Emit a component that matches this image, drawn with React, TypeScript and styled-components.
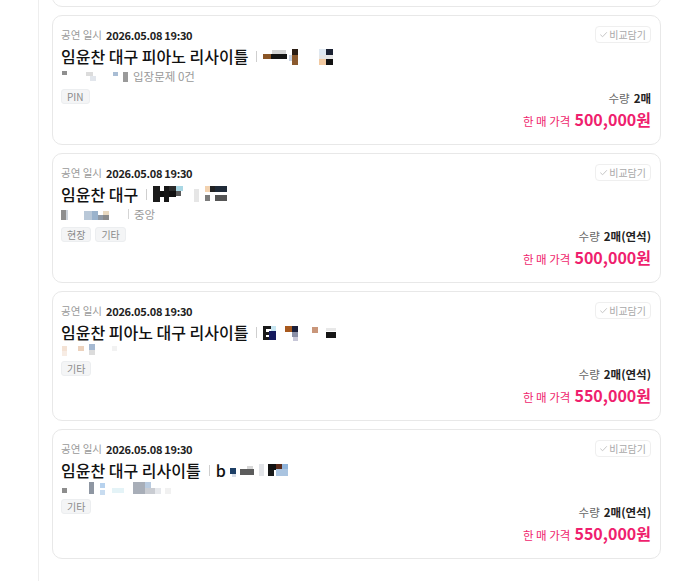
import React from "react";
import styled, { createGlobalStyle } from "styled-components";

const GlobalStyle = createGlobalStyle`
  html, body { margin: 0; padding: 0; background: #fff; }
  body {
    font-family: "Noto Sans CJK KR", "Noto Sans", sans-serif;
    -webkit-font-smoothing: antialiased;
  }
  * { box-sizing: border-box; }
`;

const Panel = styled.div`
  margin-left: 38px;
  width: 636px;
  height: 581px;
  border-left: 1px solid #eeeeee;
  padding: 0 13px;
  overflow: hidden;
`;

const List = styled.div`
  display: flex;
  flex-direction: column;
  gap: 8px;
  margin-top: -123px;
`;

const Card = styled.div`
  display: flex;
  justify-content: space-between;
  height: 130px;
  border: 1px solid #e8e8e8;
  border-radius: 10px;
  padding: 11px 9px 11px 8px;
  background: #fff;
`;

const Left = styled.div`
  display: flex;
  flex-direction: column;
  min-width: 0;
`;

const DateRow = styled.div`
  font-size: 10.5px;
  line-height: 16px;
  color: #9a9a9a;
  display: flex;
  align-items: center;
  gap: 4px;
`;

const DateValue = styled.span`
  font-size: 11px;
  font-weight: 700;
  letter-spacing: -0.3px;
  color: #222;
`;

const TitleRow = styled.div`
  display: flex;
  align-items: center;
  margin-top: 2px;
  font-size: 16px;
  line-height: 22px;
  font-weight: 500;
  color: #111;
  white-space: nowrap;
`;

const Sep = styled.span`
  display: inline-block;
  width: 1px;
  height: 11px;
  background: #cfcfcf;
  margin: 0 6px 0 8px;
`;

const InfoRow = styled.div`
  display: flex;
  align-items: center;
  gap: 4px;
  font-size: 11.5px;
  line-height: 18px;
  color: #999;
  white-space: nowrap;
`;

const InfoSep = styled.span`
  display: inline-block;
  width: 1px;
  height: 10px;
  background: #d5d5d5;
  margin: 0 1px 0 6px;
`;

const Tags = styled.div`
  display: flex;
  gap: 4px;
  margin-top: 4px;
`;

const Tag = styled.span`
  display: inline-flex;
  align-items: center;
  height: 15px;
  padding: 0 5px;
  font-size: 10px;
  color: #8a8a8a;
  background: #f4f5f6;
  border: 1px solid #eceef0;
  border-radius: 3px;
`;

const Right = styled.div`
  display: flex;
  flex-direction: column;
  align-items: flex-end;
  justify-content: space-between;
`;

const CompareBtn = styled.button`
  display: inline-flex;
  align-items: center;
  gap: 1px;
  height: 17px;
  padding: 0 4px 0 3px;
  border: 1px solid #efefef;
  border-radius: 4px;
  background: #fff;
  font-family: inherit;
  font-size: 10px;
  color: #a9a9a9;
  margin-top: -1px;
`;

const Bottom = styled.div`
  display: flex;
  flex-direction: column;
  align-items: flex-end;
`;

const Qty = styled.div`
  font-size: 11.5px;
  line-height: 18px;
  color: #666;
  b { color: #222; font-weight: 700; margin-left: 4px; }
`;

const Price = styled.div`
  display: flex;
  align-items: baseline;
  gap: 4px;
  line-height: 24px;
  color: #ef1f6e;
  font-size: 11.5px;
  strong { font-size: 16px; font-weight: 700; }
`;

type Block = [number, number, number, number, string];

const Mosaic: React.FC<{ w: number; h: number; blocks: Block[] }> = ({ w, h, blocks }) => (
  <svg width={w} height={h} viewBox={`0 0 ${w} ${h}`} style={{ display: "block", flex: "none" }}>
    {blocks.map(([x, y, bw, bh, c], i) => (
      <rect key={i} x={x} y={y} width={bw} height={bh} fill={c} />
    ))}
  </svg>
);

const Check = () => (
  <svg width="9" height="9" viewBox="0 0 10 10">
    <path d="M1.5 5.2 L4 7.5 L8.7 2.5" fill="none" stroke="#c4c4c4" strokeWidth="1.1" />
  </svg>
);

type Item = {
  title: string;
  titleExtra?: string;
  titleMosaic: { w: number; blocks: Block[] };
  infoMosaic: { w: number; blocks: Block[] };
  infoText?: string;
  infoSep?: boolean;
  tags: string[];
  qty: string;
  price: string;
};

const items: Item[] = [
  {
    title: "임윤찬 대구 피아노 리사이틀",
    titleMosaic: { w: 10, blocks: [] },
    infoMosaic: { w: 10, blocks: [] },
    tags: ["기타"],
    qty: "2매",
    price: "500,000원",
  },
  {
    title: "임윤찬 대구 피아노 리사이틀",
    titleMosaic: {
      w: 74,
      blocks: [
        [0, 7, 8, 5, "#8a5526"],
        [8, 7, 16, 5, "#141414"],
        [9, 3, 14, 4, "#d4d4d4"],
        [26, 8, 3, 6, "#c8d2e2"],
        [29, 2, 6, 6, "#2a1d14"],
        [29, 8, 6, 10, "#8b5a2e"],
        [56, 2, 7, 6, "#dfe8f1"],
        [63, 2, 7, 6, "#1c2233"],
        [56, 12, 7, 6, "#f1c9a1"],
        [63, 12, 7, 6, "#121212"],
        [56, 8, 14, 4, "#e6e6e6"],
      ],
    },
    infoMosaic: {
      w: 68,
      blocks: [
        [1, 2, 5, 4, "#8f8f8f"],
        [25, 3, 7, 4, "#dcdcdc"],
        [29, 7, 6, 5, "#e2e6ec"],
        [52, 3, 5, 4, "#a9bdd4"],
        [62, 3, 5, 10, "#9a9a9a"],
      ],
    },
    infoText: "입장문제 0건",
    tags: ["PIN"],
    qty: "2매",
    price: "500,000원",
  },
  {
    title: "임윤찬 대구",
    titleMosaic: {
      w: 78,
      blocks: [
        [0, 1, 7, 16, "#1b1b1b"],
        [7, 6, 16, 6, "#111"],
        [11, 1, 5, 16, "#161616"],
        [16, 1, 7, 5, "#2a2a2a"],
        [23, 1, 7, 5, "#a9d7e4"],
        [23, 6, 5, 5, "#5a5a5a"],
        [41, 4, 5, 13, "#e6e6e6"],
        [52, 1, 5, 6, "#f2d2b0"],
        [57, 1, 5, 6, "#222"],
        [62, 1, 12, 6, "#1f2a38"],
        [52, 10, 5, 6, "#7c7c7c"],
        [62, 10, 12, 6, "#555"],
      ],
    },
    infoMosaic: {
      w: 57,
      blocks: [
        [0, 3, 5, 10, "#8e8e8e"],
        [5, 3, 2, 10, "#cdd3db"],
        [23, 4, 8, 9, "#b9c8d8"],
        [31, 4, 6, 9, "#9bb3cc"],
        [37, 8, 5, 5, "#909aa6"],
        [42, 4, 6, 4, "#e9d9c0"],
        [42, 8, 6, 5, "#8b8b8b"],
      ],
    },
    infoText: "중앙",
    infoSep: true,
    tags: ["현장", "기타"],
    qty: "2매(연석)",
    price: "500,000원",
  },
  {
    title: "임윤찬 피아노 대구 리사이틀",
    titleMosaic: {
      w: 76,
      blocks: [
        [0, 3, 3, 14, "#1a1a1a"],
        [3, 3, 5, 3, "#1a1a1a"],
        [3, 9, 5, 3, "#1a1a1a"],
        [3, 14, 5, 3, "#1a1a1a"],
        [6, 8, 7, 9, "#141a5e"],
        [8, 3, 5, 5, "#c7e6f2"],
        [22, 3, 7, 6, "#a8591e"],
        [29, 3, 6, 6, "#1b1f3a"],
        [29, 9, 6, 5, "#8a8fa6"],
        [30, 14, 5, 5, "#c7c7d8"],
        [49, 4, 6, 6, "#c9967a"],
        [63, 5, 10, 3, "#e8e8e8"],
        [63, 9, 10, 6, "#161616"],
      ],
    },
    infoMosaic: {
      w: 56,
      blocks: [
        [1, 3, 5, 5, "#f4e2d4"],
        [1, 8, 5, 5, "#f7ece4"],
        [17, 3, 6, 5, "#ecd2bd"],
        [28, 1, 6, 6, "#a5b9d2"],
        [28, 7, 6, 5, "#dcdcdc"],
        [51, 3, 5, 5, "#f2f2f2"],
      ],
    },
    tags: ["기타"],
    qty: "2매(연석)",
    price: "550,000원",
  },
  {
    title: "임윤찬 대구 리사이틀",
    titleExtra: "b",
    titleMosaic: {
      w: 66,
      blocks: [
        [2, 7, 6, 6, "#1d3f66"],
        [4, 13, 4, 3, "#d8dee8"],
        [12, 8, 14, 6, "#5c5c5c"],
        [19, 5, 6, 3, "#d8d8d8"],
        [31, 3, 5, 12, "#e2e4e8"],
        [40, 3, 8, 6, "#121212"],
        [40, 9, 6, 6, "#1a1a1a"],
        [48, 3, 6, 5, "#5a2a1a"],
        [54, 3, 6, 6, "#8fb3d9"],
        [48, 8, 12, 7, "#aac4e0"],
      ],
    },
    infoMosaic: {
      w: 112,
      blocks: [
        [1, 7, 5, 5, "#8d8d8d"],
        [28, 1, 5, 12, "#8e96a2"],
        [39, 2, 5, 5, "#b7d2ee"],
        [39, 9, 5, 5, "#c8dcf0"],
        [51, 7, 12, 5, "#e4f3f7"],
        [72, 1, 12, 12, "#a8aeb8"],
        [84, 1, 6, 6, "#b9cbe0"],
        [84, 7, 10, 6, "#c9ccd2"],
        [94, 7, 6, 6, "#e6e8ec"],
        [104, 7, 6, 6, "#f1f1f1"],
      ],
    },
    tags: ["기타"],
    qty: "2매(연석)",
    price: "550,000원",
  },
];

const TicketCard: React.FC<{ item: Item }> = ({ item }) => (
  <Card>
    <Left>
      <DateRow>
        공연 일시 <DateValue>2026.05.08 19:30</DateValue>
      </DateRow>
      <TitleRow>
        {item.title}
        <Sep />
        {item.titleExtra && <span style={{ marginRight: 2 }}>{item.titleExtra}</span>}
        <Mosaic w={item.titleMosaic.w} h={18} blocks={item.titleMosaic.blocks} />
      </TitleRow>
      <InfoRow>
        <Mosaic w={item.infoMosaic.w} h={14} blocks={item.infoMosaic.blocks} />
        {item.infoSep && <InfoSep />}
        {item.infoText}
      </InfoRow>
      <Tags>
        {item.tags.map((t) => (
          <Tag key={t}>{t}</Tag>
        ))}
      </Tags>
    </Left>
    <Right>
      <CompareBtn>
        <Check />
        비교담기
      </CompareBtn>
      <Bottom>
        <Qty>
          수량<b>{item.qty}</b>
        </Qty>
        <Price>
          한 매 가격 <strong>{item.price}</strong>
        </Price>
      </Bottom>
    </Right>
  </Card>
);

export default function App() {
  return (
    <>
      <GlobalStyle />
      <Panel>
        <List>
          {items.map((it, i) => (
            <TicketCard key={i} item={it} />
          ))}
        </List>
      </Panel>
    </>
  );
}
